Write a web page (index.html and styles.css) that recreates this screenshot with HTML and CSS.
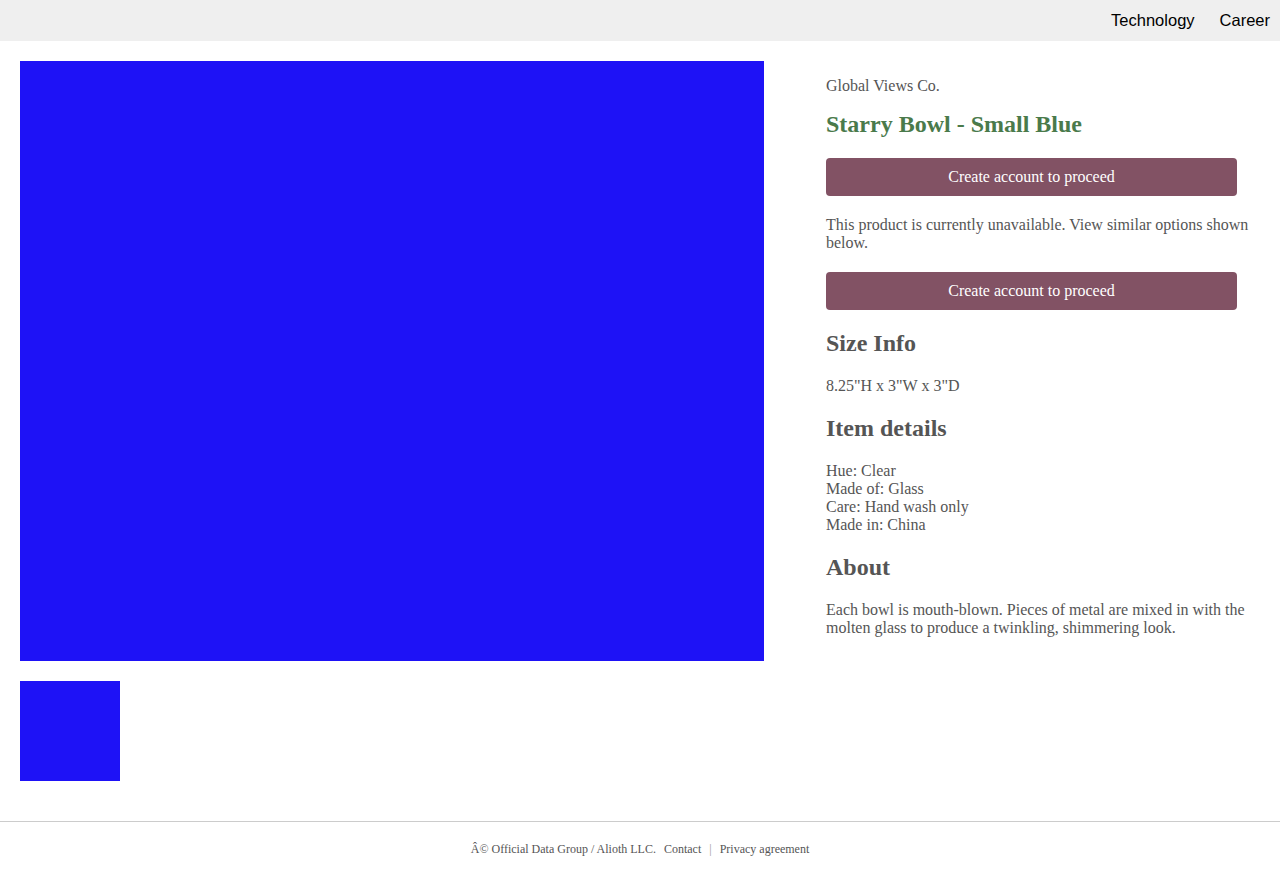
FILE: index.html
```html
<!DOCTYPE html>
<html lang="en">
<head>
<meta charset="utf-8">
<title>Starry Bowl - Small Blue</title>
<link rel="stylesheet" href="styles.css">
</head>
<body>
<nav class="topnav">
  <a class="topnav-link" href="#">Technology</a>
  <a class="topnav-link" href="#">Career</a>
</nav>
<main class="product">
  <section class="gallery">
    <div class="gallery-main"></div>
    <div class="gallery-thumb"></div>
  </section>
  <section class="info">
    <div class="info-head">
      <p class="brand">Global Views Co.</p>
      <h1 class="title">Starry Bowl - Small Blue</h1>
    </div>
    <button class="cta">Create account to proceed</button>
    <p class="text">This product is currently unavailable. View similar options shown below.</p>
    <button class="cta">Create account to proceed</button>
    <h2 class="section-title">Size Info</h2>
    <p class="text">8.25"H x 3"W x 3"D</p>
    <h2 class="section-title">Item details</h2>
    <p class="text">Hue: Clear<br>Made of: Glass<br>Care: Hand wash only<br>Made in: China</p>
    <h2 class="section-title">About</h2>
    <p class="text">Each bowl is mouth-blown. Pieces of metal are mixed in with the molten glass to produce a twinkling, shimmering look.</p>
  </section>
</main>
<footer class="footer">
  <span>Â© Official Data Group / Alioth LLC.</span>
  <a class="footer-link" href="#">Contact</a>
  <span class="footer-sep">|</span>
  <a class="footer-link" href="#">Privacy agreement</a>
</footer>
</body>
</html>
```
FILE: styles.css
```css
* { box-sizing: border-box; }
html, body { margin: 0; padding: 0; }
body {
  font-family: "Liberation Serif", "Times New Roman", serif;
  font-size: 16px;
  color: #555;
  background: #fff;
}
.topnav {
  height: 41px;
  background: #efefef;
  display: flex;
  justify-content: flex-end;
  align-items: center;
  gap: 25px;
  padding: 0 10px 0 0;
}
.topnav-link {
  font-family: "Liberation Sans", Arial, sans-serif;
  font-size: 16.5px;
  color: #000;
  text-decoration: none;
}
.product {
  display: grid;
  grid-template-columns: 744px 1fr;
  padding: 20px 20px 40px 20px;
}
.gallery {
  display: flex;
  flex-direction: column;
  gap: 20px;
}
.gallery-main {
  width: 744px;
  height: 600px;
  background: #1e12f6;
}
.gallery-thumb {
  width: 100px;
  height: 100px;
  background: #1e12f6;
}
.info {
  padding: 16px 0 0 62px;
  display: flex;
  flex-direction: column;
  gap: 20px;
}
.info-head {
  display: flex;
  flex-direction: column;
  gap: 16px;
}
.brand, .text, .title, .section-title { margin: 0; }
.brand { line-height: 18px; }
.title {
  font-size: 24px;
  font-weight: bold;
  color: #4a7a4b;
  line-height: 27px;
}
.section-title {
  font-size: 24px;
  font-weight: bold;
  color: #555;
  line-height: 27px;
}
.text { line-height: 18px; }
.cta {
  width: 411px;
  height: 38px;
  background: #825264;
  color: #fff;
  border: none;
  border-radius: 4px;
  font-family: "Liberation Serif", "Times New Roman", serif;
  font-size: 16px;
  padding: 0;
}
.footer {
  border-top: 1px solid #ccc;
  padding: 20px 0 21px;
  text-align: center;
  font-size: 12px;
  line-height: 14px;
  color: #555;
}
.footer-link {
  color: #555;
  text-decoration: none;
  margin-left: 5px;
}
.footer-sep {
  color: #999;
  margin-left: 5px;
}
```
